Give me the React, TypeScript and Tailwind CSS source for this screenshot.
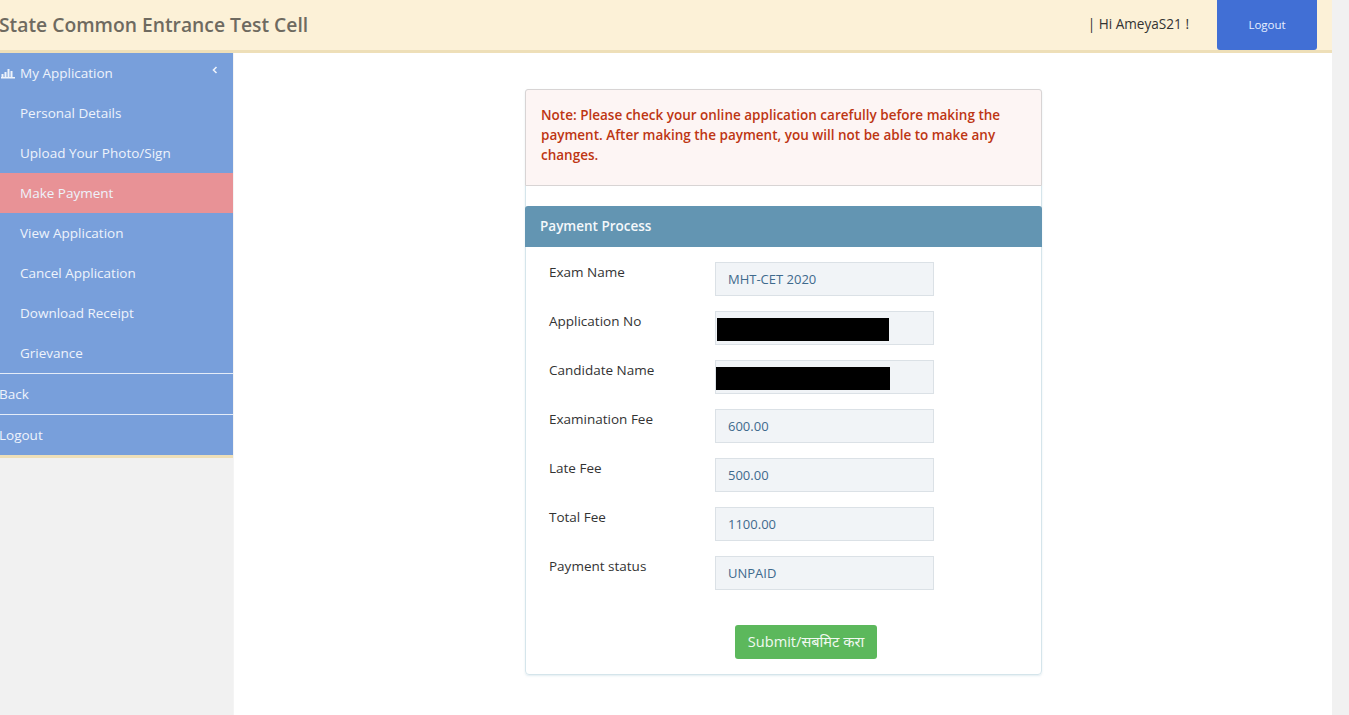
import React from "react";

const menuItems = [
  { label: "Personal Details" },
  { label: "Upload Your Photo/Sign" },
  { label: "Make Payment", active: true },
  { label: "View Application" },
  { label: "Cancel Application" },
  { label: "Download Receipt" },
  { label: "Grievance" },
];

const fields = [
  { label: "Exam Name", value: "MHT-CET 2020" },
  { label: "Application No", hidden: "-ml-[11px] mt-[1px] w-[172px] h-[23px] bg-black" },
  { label: "Candidate Name", hidden: "-ml-[12px] mt-[1px] w-[174px] h-[23px] bg-black" },
  { label: "Examination Fee", value: "600.00" },
  { label: "Late Fee", value: "500.00" },
  { label: "Total Fee", value: "1100.00" },
  { label: "Payment status", value: "UNPAID" },
];

const App: React.FC = () => {
  return (
    <div className="h-[715px] w-[1349px] flex overflow-hidden bg-[#f1f1f1] font-['Open_Sans','Noto_Sans',sans-serif]">
      <div className="w-[1332px] flex flex-col bg-white">
        {/* Header */}
        <header className="h-[53px] shrink-0 flex items-start justify-between bg-[#fcf1d7] border-b-[3px] border-[#eedfb8]">
          <h1 className="mt-[12px] -ml-px text-[19.3px] leading-[26px] font-semibold text-[#6e6a60]">
            State Common Entrance Test Cell
          </h1>
          <div className="flex items-start">
            <span className="mt-[14px] mr-[28px] text-[13.6px] leading-[20px] text-[#333]">
              | Hi AmeyaS21 !
            </span>
            <button className="h-[50px] w-[100px] mr-[15px] rounded-b-[3px] bg-[#416fd5] text-[11.5px] text-[#e8f0ff]">
              Logout
            </button>
          </div>
        </header>

        <div className="flex flex-1 min-h-0">
          {/* Sidebar */}
          <aside className="w-[234px] shrink-0 bg-[#f1f1f1] border-r border-[#f4f4f4]">
            <nav className="bg-[#789fdb] text-[13.5px] text-[#eef3fb] border-b-[3px] border-[#eedfb8]">
              <div className="h-[40px] flex items-center justify-between pr-[14px]">
                <span className="flex items-center">
                  <svg width="20" height="12" viewBox="0 0 20 12" className="shrink-0" fill="#eef3fb">
                    <rect x="1" y="10" width="14" height="1.5" />
                    <rect x="1.5" y="7" width="2" height="3" />
                    <rect x="4.5" y="5" width="2" height="5" />
                    <rect x="7.5" y="2" width="2" height="8" />
                    <rect x="10.5" y="4" width="2" height="6" />
                  </svg>
                  My Application
                </span>
                <svg width="8" height="10" viewBox="0 0 8 10" className="-mt-[6px] ml-px" fill="none" stroke="#eef3fb" strokeWidth="1.6">
                  <path d="M5.5 2 2.5 5l3 3" />
                </svg>
              </div>
              {menuItems.map((item) => (
                <div
                  key={item.label}
                  className={`h-[40px] flex items-center pl-[20px] ${item.active ? "bg-[#e89296]" : ""}`}
                >
                  {item.label}
                </div>
              ))}
              <div className="h-[41px] flex items-center -ml-px border-t border-[#e4ecf8]">Back</div>
              <div className="h-[41px] flex items-center -ml-px border-t border-[#e4ecf8]">Logout</div>
            </nav>
          </aside>

          {/* Content */}
          <main className="flex-1 pl-[291px] pt-[36px]">
            <div className="w-[517px] h-[586px] rounded-[4px] border border-[#d5e5eb] shadow-[0_1px_2px_rgba(200,220,230,0.5)]">
              <div className="h-[97px] -mt-px -mx-px px-[15px] pt-[15px] rounded-t-[3px] bg-[#fdf5f4] border border-[#d8d4d4] text-[13.5px] leading-[20px] font-semibold text-[#bd3513]">
                Note: Please check your online application carefully before making the payment. After making the payment, you will not be able to make any changes.
              </div>
              <div className="mt-[20px] -mx-px h-[41px] px-[15px] pb-px flex items-center rounded-t-[3px] bg-[#6395b2] text-[13.5px] font-semibold text-[#f4f8fb]">
                Payment Process
              </div>
              <div className="mt-[15px] flex flex-col gap-[15px]">
                {fields.map((field) => (
                  <div key={field.label} className="h-[34px] flex items-start pl-[23px]">
                    <label className="w-[166px] text-[13.5px] leading-[20px] text-[#333]">{field.label}</label>
                    <div className="w-[219px] h-[34px] flex items-center px-[12px] pt-px bg-[#f1f4f7] border border-[#dbe1e6] text-[13px] text-[#3f6a8d]">
                      {field.hidden ? <div className={field.hidden} /> : field.value}
                    </div>
                  </div>
                ))}
              </div>
              <div className="mt-[35px] pl-[209px]">
                <button className="h-[34px] w-[142px] rounded-[3px] bg-[#5cb85c] text-[14.6px] text-[#f1f9f1] pb-px">
                  Submit/सबमिट करा
                </button>
              </div>
            </div>
          </main>
        </div>
      </div>
    </div>
  );
};

export default App;
